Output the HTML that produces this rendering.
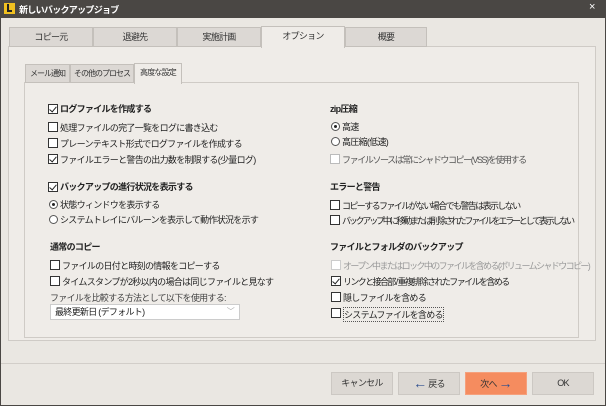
<!DOCTYPE html>
<html><head><meta charset="utf-8"><style>
*{box-sizing:border-box;margin:0;padding:0}
body{width:606px;height:406px;background:#4a4744;font-family:"Liberation Sans","Noto Sans CJK JP",sans-serif;font-size:9px;letter-spacing:-0.7px;color:#222;position:relative;overflow:hidden}
.win{position:absolute;left:1px;top:18px;width:604px;height:387px;background:#eae7e2}
.a{position:absolute;white-space:nowrap}
.tab{position:absolute;top:27px;height:20px;background:#dcd8d4;border:1px solid #c4c0bb;text-align:center;line-height:18px;color:#333;white-space:nowrap;overflow:hidden}
.panel{position:absolute;border:1px solid #cfcbc6;background:#efece8}
.cb{position:absolute;width:10px;height:10px;border:1px solid #333;background:#fff}
.cb.c::after{content:"";position:absolute;left:2px;top:0px;width:3px;height:6px;border:solid #222;border-width:0 1.3px 1.3px 0;transform:rotate(40deg)}
.rd{position:absolute;width:9px;height:9px;border:1px solid #555;border-radius:50%;background:#fff}
.rd.c::after{content:"";position:absolute;left:2px;top:2px;width:3px;height:3px;border-radius:50%;background:#222}
.b{font-weight:bold}
.btn{position:absolute;top:372px;height:23px;width:62px;background:#dcd8d3;border:1px solid #ccc8c3;text-align:center;line-height:21px;font-size:9px;color:#333}
.n{letter-spacing:-1.6px}
.ar{color:#2f4f8f;font-weight:bold;font-size:14px;vertical-align:-1px}
</style></head><body>
<div class="a" style="left:4px;top:3px;width:11px;height:11px;background:#f0c020"></div>
<div class="a" style="left:7px;top:4px;width:5px;height:8px;border-left:2px solid #222;border-bottom:2px solid #222"></div>
<div class="a" style="left:19px;top:3px;color:#fff;font-weight:bold;font-size:9px">新しいバックアップジョブ</div>
<div class="a" style="left:589px;top:1px;color:#fff;font-size:11px">×</div>
<div class="win"></div>
<div class="panel" style="left:8px;top:46px;width:588px;height:295px"></div>
<div class="tab" style="left:9px;width:84px">コピー元</div>
<div class="tab" style="left:93px;width:84px">退避先</div>
<div class="tab" style="left:177px;width:84px">実施計画</div>
<div class="tab" style="left:261px;width:84px;top:26px;height:22px;background:#efece8;border-bottom:none">オプション</div>
<div class="tab" style="left:345px;width:82px">概要</div>
<div class="panel" style="left:24px;top:82px;width:555px;height:256px"></div>
<div class="tab" style="left:25px;top:64px;height:19px;width:45px;font-size:8px;line-height:17px;letter-spacing:-1px">メール通知</div>
<div class="tab" style="left:70px;top:64px;height:19px;width:64px;font-size:8px;line-height:17px;letter-spacing:-1px">その他のプロセス</div>
<div class="tab" style="left:134px;top:63px;height:21px;width:48px;font-size:8px;line-height:18px;letter-spacing:-0.8px;background:#efece8;border-bottom:none">高度な設定</div>

<div class="cb c" style="left:48px;top:104px"></div><div class="a b" style="left:60px;top:102px">ログファイルを作成する</div>
<div class="cb" style="left:48px;top:122px"></div><div class="a" style="left:60px;top:121px">処理ファイルの完了一覧をログに書き込む</div>
<div class="cb" style="left:48px;top:138px"></div><div class="a" style="left:60px;top:137px">プレーンテキスト形式でログファイルを作成する</div>
<div class="cb c" style="left:48px;top:154px"></div><div class="a" style="left:60px;top:153px">ファイルエラーと警告の出力数を制限する(少量ログ)</div>
<div class="cb c" style="left:48px;top:182px"></div><div class="a b" style="left:60px;top:180px">バックアップの進行状況を表示する</div>
<div class="rd c" style="left:49px;top:200px"></div><div class="a" style="left:60px;top:198px">状態ウィンドウを表示する</div>
<div class="rd" style="left:49px;top:215px"></div><div class="a" style="left:60px;top:213px">システムトレイにバルーンを表示して動作状況を示す</div>
<div class="a b" style="left:50px;top:240px">通常のコピー</div>
<div class="cb" style="left:50px;top:260px"></div><div class="a" style="left:62px;top:259px">ファイルの日付と時刻の情報をコピーする</div>
<div class="cb" style="left:50px;top:276px"></div><div class="a" style="left:62px;top:275px">タイムスタンプが2秒以内の場合は同じファイルと見なす</div>
<div class="a" style="left:50px;top:291px;color:#444">ファイルを比較する方法として以下を使用する:</div>
<div class="a" style="left:50px;top:304px;width:190px;height:16px;background:#fff;border:1px solid #ccc;padding:1px 4px;line-height:12px">最終更新日 (デフォルト)<span style="position:absolute;right:5px;color:#aaa;font-size:8px">﹀</span></div>

<div class="a b" style="left:330px;top:102px">zip圧縮</div>
<div class="rd c" style="left:331px;top:122px"></div><div class="a" style="left:342px;top:120px">高速</div>
<div class="rd" style="left:331px;top:137px"></div><div class="a" style="left:342px;top:135px">高圧縮(低速)</div>
<div class="cb" style="left:330px;top:154px;border-color:#bbb"></div><div class="a" style="left:342px;top:153px;color:#555;letter-spacing:-1.4px">ファイルソースは常にシャドウコピー(VSS)を使用する</div>
<div class="a b" style="left:330px;top:180px">エラーと警告</div>
<div class="cb" style="left:330px;top:200px"></div><div class="a n" style="left:342px;top:199px">コピーするファイルがない場合でも警告は表示しない</div>
<div class="cb" style="left:330px;top:215px"></div><div class="a" style="left:342px;top:214px;letter-spacing:-2.2px">バックアップ中に移動または削除されたファイルをエラーとして表示しない</div>
<div class="a b" style="left:330px;top:240px">ファイルとフォルダのバックアップ</div>
<div class="cb" style="left:331px;top:260px;border-color:#ccc"></div><div class="a n" style="left:343px;top:259px;color:#999">オープン中またはロック中のファイルを含める(ボリュームシャドウコピー)</div>
<div class="cb c" style="left:331px;top:276px"></div><div class="a n" style="left:343px;top:275px">リンクと接合部 / 重複排除されたファイルを含める</div>
<div class="cb" style="left:331px;top:292px"></div><div class="a" style="left:343px;top:291px">隠しファイルを含める</div>
<div class="cb" style="left:331px;top:308px"></div><div class="a" style="left:343px;top:307px;border:1px dotted #555">システムファイルを含める</div>

<div class="a" style="left:1px;top:363px;width:604px;height:1px;background:#d2cec9"></div>
<div class="btn" style="left:331px">キャンセル</div>
<div class="btn" style="left:398px"><span class="ar">←</span> 戻る</div>
<div class="btn" style="left:465px;background:#f58c5f;border-color:#f5a07c">次へ <span class="ar">→</span></div>
<div class="btn" style="left:532px">OK</div>
</body></html>
